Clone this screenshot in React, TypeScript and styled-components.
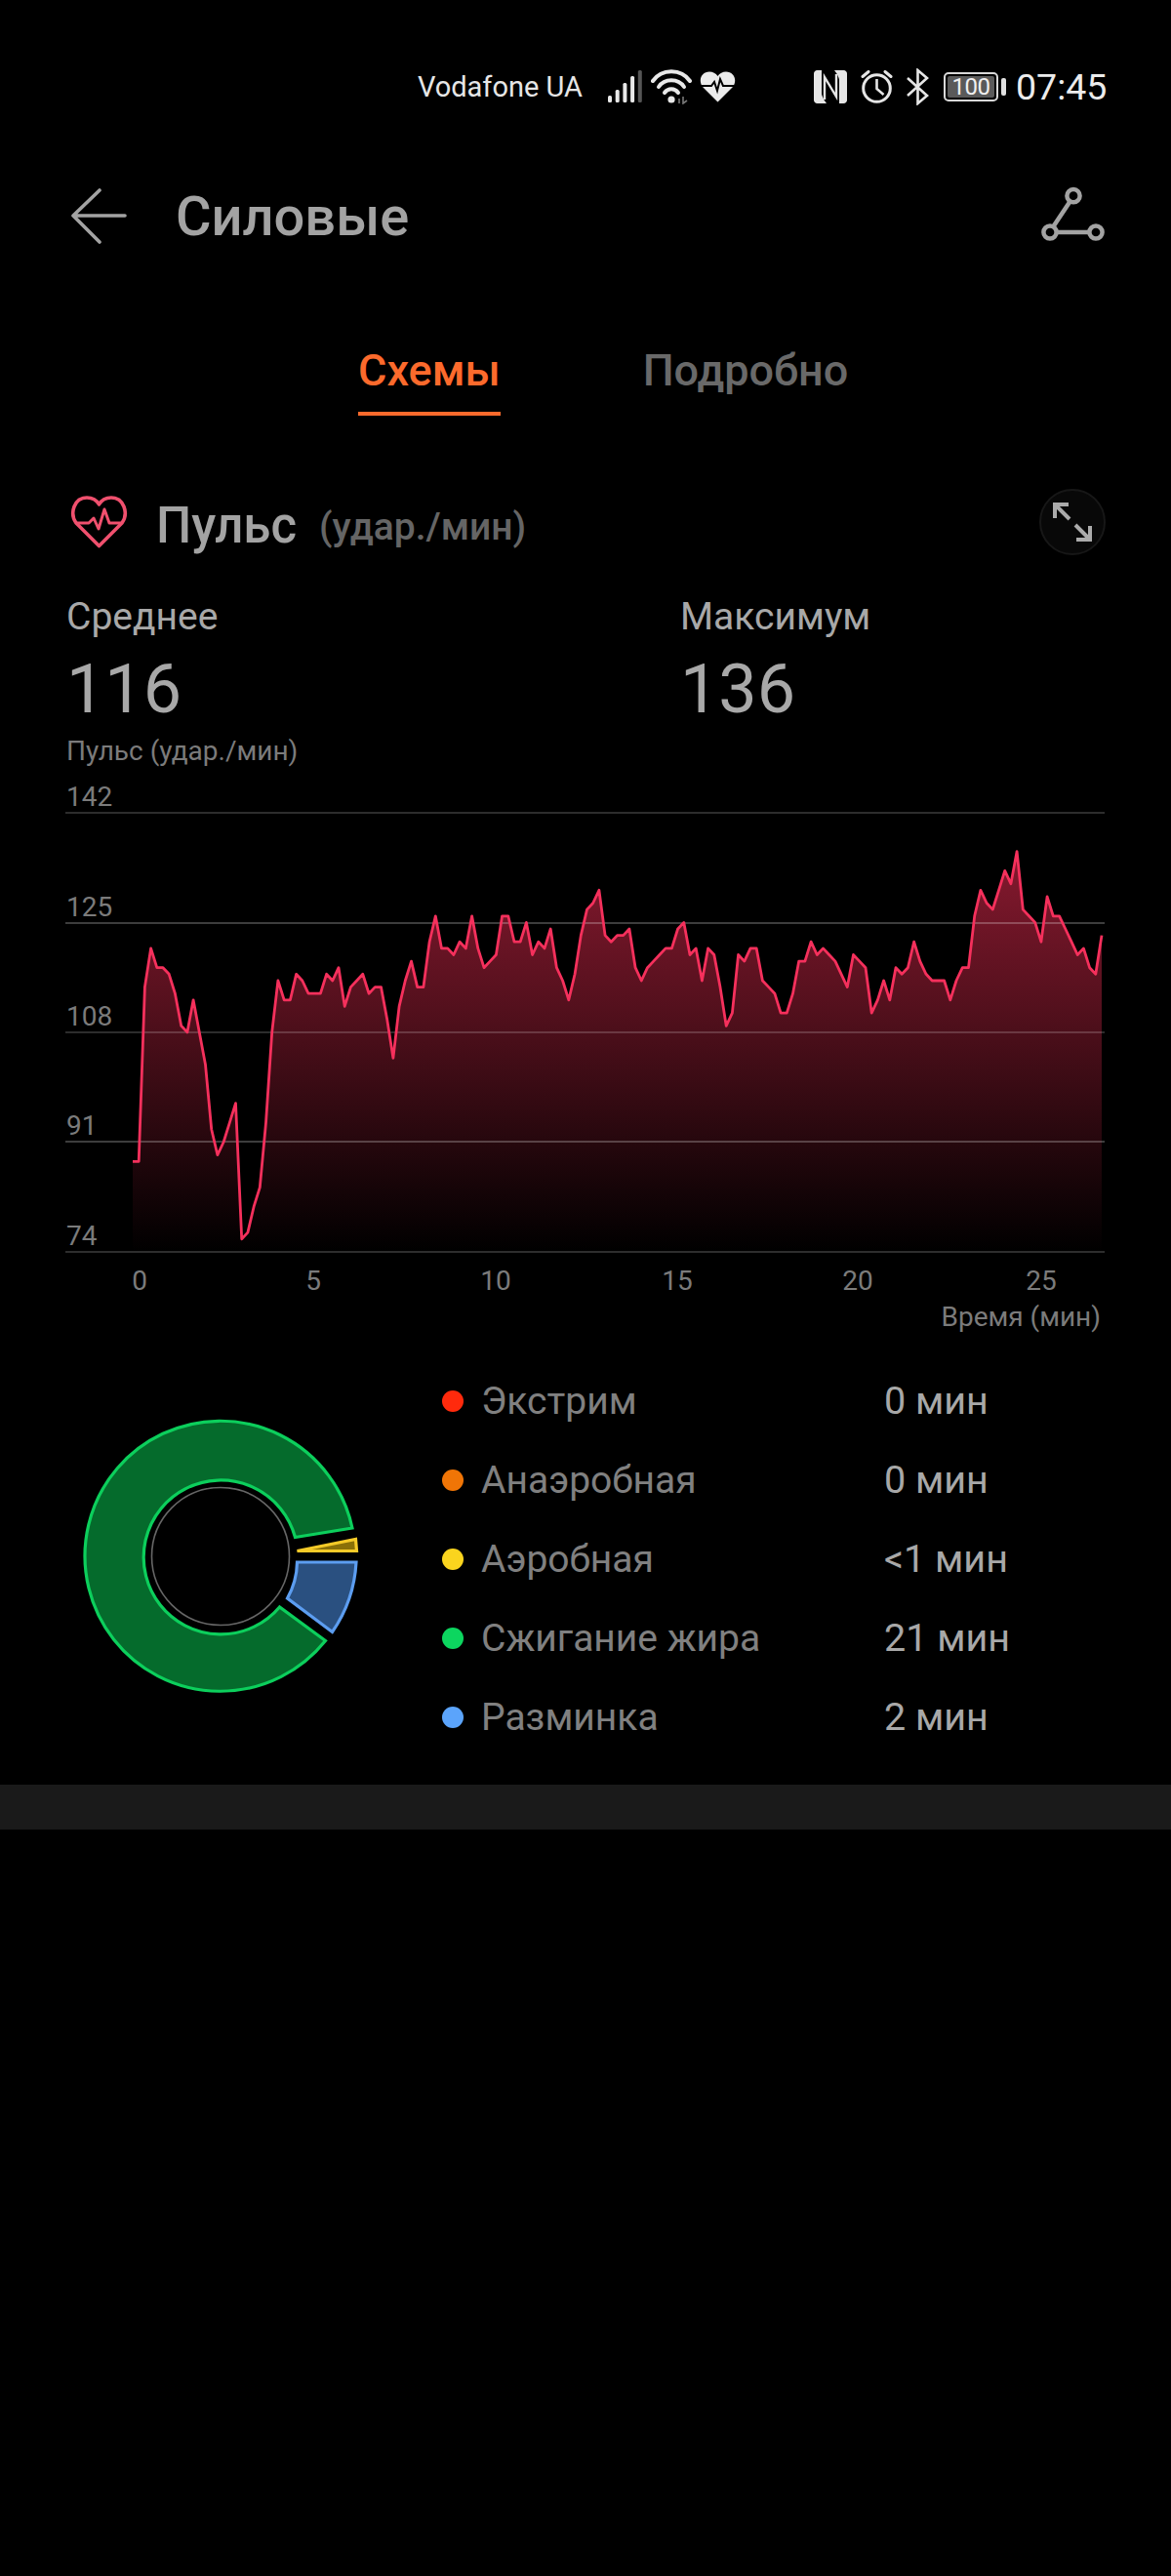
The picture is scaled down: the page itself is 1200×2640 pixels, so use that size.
import styled, { createGlobalStyle } from "styled-components";

const GlobalStyle = createGlobalStyle`
  html, body {
    margin: 0;
    padding: 0;
    background: #000;
  }
  body {
    font-family: Roboto, "Liberation Sans", sans-serif;
  }
`;

const Page = styled.div`
  width: 1200px;
  height: 2640px;
  background: #000;
  overflow: hidden;
`;

const StatusBar = styled.div`
  height: 36px;
  padding: 71px 66px 0 0;
  display: flex;
  align-items: center;
  justify-content: flex-end;
  color: #e6e6e6;
`;

const Carrier = styled.span`
  font-size: 29px;
  font-weight: 400;
  line-height: 36px;
  margin-right: 26px;
`;

const StatusIcon = styled.svg<{ $gap?: number }>`
  display: block;
  flex: none;
  margin-right: ${(props) => props.$gap ?? 0}px;
`;

const Battery = styled.div`
  position: relative;
  flex: none;
  box-sizing: border-box;
  width: 56px;
  height: 30px;
  margin-right: 18px;
  margin-left: 15px;
  border: 2px solid #d8d8d8;
  border-radius: 5px;
  padding: 2px;
  display: flex;

  &::after {
    content: "";
    position: absolute;
    left: 57px;
    top: 4px;
    width: 5px;
    height: 18px;
    border-radius: 2px;
    background: #e0e0e0;
  }
`;

const BatteryFill = styled.span`
  flex: 1;
  background: #5a5a5a;
  border-radius: 2px;
  color: #f0f0f0;
  font-size: 24px;
  line-height: 22px;
  text-align: center;
  letter-spacing: -0.5px;
`;

const Clock = styled.span`
  font-size: 37.5px;
  line-height: 36px;
  color: #ececec;
  width: 93px;
  text-align: right;
  white-space: nowrap;
`;

const Toolbar = styled.div`
  height: 112px;
  margin-top: 59px;
  padding: 0 66px 0 72px;
  display: flex;
  align-items: center;
`;

const Title = styled.h1`
  flex: 1;
  margin: 0 0 0 50px;
  font-size: 56px;
  font-weight: 500;
  color: #a3a3a3;
`;

const TabRow = styled.div`
  height: 76px;
  margin-top: 72px;
  padding-left: 367px;
  display: flex;
  gap: 146px;
`;

const Tab = styled.div<{ $active?: boolean }>`
  box-sizing: border-box;
  height: 76px;
  font-size: 45px;
  font-weight: 500;
  line-height: 60px;
  color: ${(props) => (props.$active ? "#fc6a2c" : "#696969")};
  border-bottom: 4px solid ${(props) => (props.$active ? "#fc6a2c" : "transparent")};
`;

const Section = styled.section`
  padding: 0 67px;
`;

const PulseHeader = styled.div`
  height: 66px;
  margin-top: 76px;
  padding-left: 5px;
  display: flex;
  align-items: center;
`;

const PulseTitle = styled.span`
  margin-left: 28px;
  margin-top: 6px;
  font-size: 51px;
  font-weight: 500;
  color: #a3a3a3;
`;

const PulseUnit = styled.span`
  flex: 1;
  margin-left: 23px;
  margin-top: 10px;
  font-size: 39px;
  font-weight: 500;
  color: #656565;
`;

const ExpandButton = styled.button`
  flex: none;
  width: 68px;
  height: 68px;
  padding: 0;
  border: 2px solid #171717;
  border-radius: 50%;
  background: #080808;
  display: flex;
  align-items: center;
  justify-content: center;
`;

const Stats = styled.div`
  margin-top: 42px;
  padding-left: 1px;
  display: grid;
  grid-template-columns: 629px 1fr;
`;

const StatLabel = styled.div`
  font-size: 39px;
  line-height: 44px;
  color: #a8a8a8;
`;

const StatValue = styled.div`
  margin-top: 12px;
  font-size: 70px;
  line-height: 80px;
  color: #a8a8a8;
`;

const ChartUnit = styled.div`
  margin-top: 6px;
  padding-left: 1px;
  font-size: 28px;
  line-height: 36px;
  color: #7b7b7b;
`;

const Chart = styled.svg`
  display: block;
  margin-top: 2px;
`;

const AxisLabel = styled.text`
  font-family: Roboto, "Liberation Sans", sans-serif;
  font-size: 28px;
  fill: #7b7b7b;
`;

const ZoneRow = styled.div`
  height: 405px;
  margin-top: 25px;
  display: flex;
  align-items: center;
`;

const Donut = styled.svg`
  display: block;
  flex: none;
  margin: -6px 0 0 13px;
`;

const Legend = styled.div`
  margin-left: 73px;
  flex: 1;
`;

const LegendRow = styled.div`
  height: 81px;
  display: flex;
  align-items: center;
  font-size: 39px;
`;

const Dot = styled.span<{ $color: string }>`
  flex: none;
  width: 22px;
  height: 22px;
  margin-right: 18px;
  border-radius: 50%;
  background: ${(props) => props.$color};
`;

const ZoneName = styled.span`
  width: 413px;
  color: #808080;
`;

const ZoneTime = styled.span`
  font-size: 39.5px;
  color: #a8a8a8;
`;

const Band = styled.div`
  height: 46px;
  margin-top: 29px;
  background: #1a1a1a;
`;

const bpm = [
  88, 88, 115, 121, 118, 118, 117, 114, 109, 108, 113, 108, 103, 93, 89, 91, 94, 97, 76, 77, 81, 84, 94, 108, 116, 113,
  113, 117, 116, 114, 114, 114, 117, 116, 118, 112, 115, 116, 117, 114, 115, 115, 110, 104, 112, 116, 119, 115, 115,
  122, 126, 121, 121, 120, 122, 121, 126, 121, 118, 119, 120, 126, 126, 122, 122, 125, 120, 122, 121, 124, 118, 116,
  113, 117, 123, 127, 128, 130, 123, 122, 123, 123, 124, 118, 116, 118, 119, 120, 121, 121, 124, 125, 120, 121, 116,
  121, 120, 115, 109, 111, 120, 119, 121, 121, 116, 115, 114, 111, 111, 114, 119, 119, 122, 120, 121, 120, 119, 117,
  115, 120, 119, 118, 111, 113, 116, 113, 118, 117, 118, 122, 119, 117, 116, 116, 116, 113, 116, 118, 118, 126, 130,
  128, 127, 130, 133, 131, 136, 127, 126, 125, 122, 129, 126, 126, 124, 122, 120, 121, 118, 117, 123,
];

const firstX = 136;
const lastX = 1129;
const stepX = (lastX - firstX) / (bpm.length - 1);
const toY = (value: number) => 1283 - (value - 74) * 6.62;
const linePoints = bpm.map((v, i) => `${(firstX + i * stepX).toFixed(1)},${toY(v).toFixed(1)}`).join(" ");
const areaPoints = `${firstX},1283 ${linePoints} ${lastX},1283`;

const gridLines = [
  { label: "142", y: 833, width: 1.5 },
  { label: "125", y: 946, width: 2 },
  { label: "108", y: 1058, width: 1.5 },
  { label: "91", y: 1170, width: 2 },
  { label: "74", y: 1283, width: 1.5 },
];

const timeTicks = [
  { label: "0", x: 143 },
  { label: "5", x: 321 },
  { label: "10", x: 508 },
  { label: "15", x: 694 },
  { label: "20", x: 879 },
  { label: "25", x: 1067 },
];

const zones = [
  { name: "Экстрим", time: "0 мин", color: "#ff2a0c" },
  { name: "Анаэробная", time: "0 мин", color: "#f07506" },
  { name: "Аэробная", time: "<1 мин", color: "#fad41e" },
  { name: "Сжигание жира", time: "21 мин", color: "#0cd65f" },
  { name: "Разминка", time: "2 мин", color: "#5ba4fb" },
];

function SignalIcon() {
  const bars = [7, 13, 20, 27];
  return (
    <StatusIcon width="35" height="34" viewBox="0 0 35 34" $gap={9}>
      {bars.map((h, i) => (
        <rect key={h} x={i * 7.7} y={33 - h} width="4" height={h} rx="1.5" fill="#e8e8e8" />
      ))}
      <rect x="30.8" y="0" width="4" height="33" rx="1.5" fill="#555" />
    </StatusIcon>
  );
}

function WifiIcon() {
  return (
    <StatusIcon width="44" height="36" viewBox="0 0 44 36" fill="none" $gap={6}>
      <path d="M2 12 C 11 -1, 31 -1, 40 12" stroke="#e8e8e8" strokeWidth="4" strokeLinecap="round" />
      <path d="M8 18 C 14 9, 28 9, 34 18" stroke="#e8e8e8" strokeWidth="4" strokeLinecap="round" />
      <path d="M14 24 C 17.5 19, 24.5 19, 28 24" stroke="#e8e8e8" strokeWidth="4" strokeLinecap="round" />
      <circle cx="21" cy="31" r="3.6" fill="#e8e8e8" />
      <path d="M29 35 L29 30 M33 28 L33 35 L37 32" stroke="#777" strokeWidth="1.6" />
    </StatusIcon>
  );
}

function HeartRateIcon() {
  return (
    <StatusIcon width="37" height="32" viewBox="0 0 37 32" $gap={0}>
      <path
        d="M18.5 31.5 L3 16 C-2 9 2 0.5 10 0.5 C13.5 0.5 16.5 2 18.5 5 C20.5 2 23.5 0.5 27 0.5 C35 0.5 39 9 34 16 Z"
        fill="#ececec"
      />
      <path d="M0 15 H12 L15 11 L18 20 L21 8 L24 15 H37" fill="none" stroke="#000" strokeWidth="2" />
    </StatusIcon>
  );
}

function NfcIcon() {
  return (
    <StatusIcon width="34" height="34" viewBox="0 0 34 34" fill="none" $gap={14}>
      <rect x="0" y="0" width="34" height="34" rx="5" fill="#e6e6e6" />
      <path d="M8 0 H26 V34 H8 Z" fill="#000" />
      <path d="M0 4 Q0 0 4 0 H7 V17 Q7 27 13 34 H4 Q0 34 0 30 Z" fill="#e6e6e6" />
      <path d="M34 30 Q34 34 30 34 H27 V17 Q27 7 21 0 H30 Q34 0 34 4 Z" fill="#e6e6e6" />
      <path d="M11 30 V7 L23 27 V4" stroke="#e6e6e6" strokeWidth="2.4" />
    </StatusIcon>
  );
}

function AlarmIcon() {
  return (
    <StatusIcon width="33" height="34" viewBox="0 0 33 34" fill="none" stroke="#e6e6e6" $gap={14}>
      <circle cx="16.5" cy="18.5" r="13.8" strokeWidth="3" />
      <path d="M16.5 9 V19 L23.5 25" strokeWidth="2.6" />
      <path d="M2 6.5 L8 1.5 M31 6.5 L25 1.5" strokeWidth="3" strokeLinecap="round" />
    </StatusIcon>
  );
}

function BluetoothIcon() {
  return (
    <StatusIcon width="23" height="38" viewBox="0 0 23 38" fill="none" $gap={0}>
      <path d="M1 10 L21 28 L11.5 36 V2 L21 10 L1 28" stroke="#e6e6e6" strokeWidth="2.6" />
    </StatusIcon>
  );
}

function BackArrow() {
  return (
    <svg width="58" height="58" viewBox="0 0 58 58" fill="none">
      <path
        d="M56 28 H3 M30 2 L3 28 L30 55"
        stroke="#a3a3a3"
        strokeWidth="3.6"
        strokeLinecap="round"
        strokeLinejoin="round"
      />
    </svg>
  );
}

function RouteIcon() {
  return (
    <svg width="68" height="68" viewBox="0 0 68 68" fill="none" stroke="#a3a3a3" strokeWidth="4.5">
      <circle cx="34" cy="12.7" r="6.6" />
      <circle cx="10" cy="50" r="6.6" />
      <circle cx="57" cy="50" r="6.6" />
      <path d="M30.5 18.5 L13.5 44 M17 50 H50" />
    </svg>
  );
}

function HeartEcgIcon() {
  return (
    <svg width="60" height="54" viewBox="0 0 60 54" fill="none" stroke="#f0506e" strokeWidth="3.6" strokeLinejoin="round">
      <path d="M29.5 51.5 L6 28 C-1 18 4 2 17 2 C22 2 27 4.5 29.5 9 C32 4.5 37 2 42 2 C55 2 60 18 53 28 Z" />
      <path d="M6 28 H19 L24 23 L29 34 L35 14 L40 28 H53" strokeWidth="3" />
    </svg>
  );
}

function ExpandIcon() {
  return (
    <svg width="44" height="44" viewBox="0 0 44 44" fill="none" stroke="#ababab" strokeWidth="4">
      <path d="M4 18 V4 H18 M4 4 L19 19" />
      <path d="M40 26 V40 H26 M40 40 L25 25" />
    </svg>
  );
}

export default function App() {
  return (
    <Page>
      <GlobalStyle />
      <StatusBar>
        <Carrier>Vodafone UA</Carrier>
        <SignalIcon />
        <WifiIcon />
        <HeartRateIcon />
        <StatusIcon width="80" height="1" />
        <NfcIcon />
        <AlarmIcon />
        <BluetoothIcon />
        <Battery>
          <BatteryFill>100</BatteryFill>
        </Battery>
        <Clock>07:45</Clock>
      </StatusBar>

      <Toolbar>
        <BackArrow />
        <Title>Силовые</Title>
        <RouteIcon />
      </Toolbar>

      <TabRow>
        <Tab $active>Схемы</Tab>
        <Tab>Подробно</Tab>
      </TabRow>

      <Section>
        <PulseHeader>
          <HeartEcgIcon />
          <PulseTitle>Пульс</PulseTitle>
          <PulseUnit>(удар./мин)</PulseUnit>
          <ExpandButton type="button">
            <ExpandIcon />
          </ExpandButton>
        </PulseHeader>

        <Stats>
          <div>
            <StatLabel>Среднее</StatLabel>
            <StatValue>116</StatValue>
          </div>
          <div>
            <StatLabel>Максимум</StatLabel>
            <StatValue>136</StatValue>
          </div>
        </Stats>
        <ChartUnit>Пульс (удар./мин)</ChartUnit>

        <Chart width="1066" height="580" viewBox="67 790 1066 580">
          <defs>
            <linearGradient id="pulseFill" gradientUnits="userSpaceOnUse" x1="0" y1="860" x2="0" y2="1283">
              <stop offset="0" stopColor="#8a1a30" />
              <stop offset="0.45" stopColor="#4e0f1b" />
              <stop offset="1" stopColor="#000" />
            </linearGradient>
          </defs>
          <polygon points={areaPoints} fill="url(#pulseFill)" />
          {gridLines.map((line) => (
            <g key={line.label}>
              <line x1="67" x2="1132" y1={line.y} y2={line.y} stroke="#ffffff" strokeOpacity="0.24" strokeWidth={line.width} />
              <AxisLabel x="68" y={line.y - 7}>
                {line.label}
              </AxisLabel>
            </g>
          ))}
          <polyline points={linePoints} fill="none" stroke="#f5305c" strokeWidth="2.8" strokeLinejoin="round" />
          {timeTicks.map((tick) => (
            <AxisLabel key={tick.label} x={tick.x} y="1322" textAnchor="middle">
              {tick.label}
            </AxisLabel>
          ))}
          <AxisLabel x="1128" y="1359" textAnchor="end">
            Время (мин)
          </AxisLabel>
        </Chart>

        <ZoneRow>
          <Donut width="300" height="300" viewBox="80 1445 300 300">
            <path
              d="M361 1566 A138.5 138.5 0 1 0 333.5 1681.5 L286.5 1647 A79 79 0 1 1 302.5 1575.5 Z"
              fill="#056b2c"
              stroke="#0ccf5c"
              strokeWidth="3.2"
            />
            <path d="M304.5 1589.5 L364.5 1577.5 L365.5 1589.5 Z" fill="#8a7008" stroke="#f5ca28" strokeWidth="3.2" />
            <path
              d="M304.5 1601 H365 A138.5 138.5 0 0 1 340.5 1672.5 L294.5 1638 A79 79 0 0 0 304.5 1601 Z"
              fill="#2a5080"
              stroke="#5c9df0"
              strokeWidth="3.2"
            />
            <circle cx="226" cy="1595" r="70.5" fill="none" stroke="#666" strokeWidth="1.6" />
          </Donut>
          <Legend>
            {zones.map((zone) => (
              <LegendRow key={zone.name}>
                <Dot $color={zone.color} />
                <ZoneName>{zone.name}</ZoneName>
                <ZoneTime>{zone.time}</ZoneTime>
              </LegendRow>
            ))}
          </Legend>
        </ZoneRow>
      </Section>

      <Band />
    </Page>
  );
}
